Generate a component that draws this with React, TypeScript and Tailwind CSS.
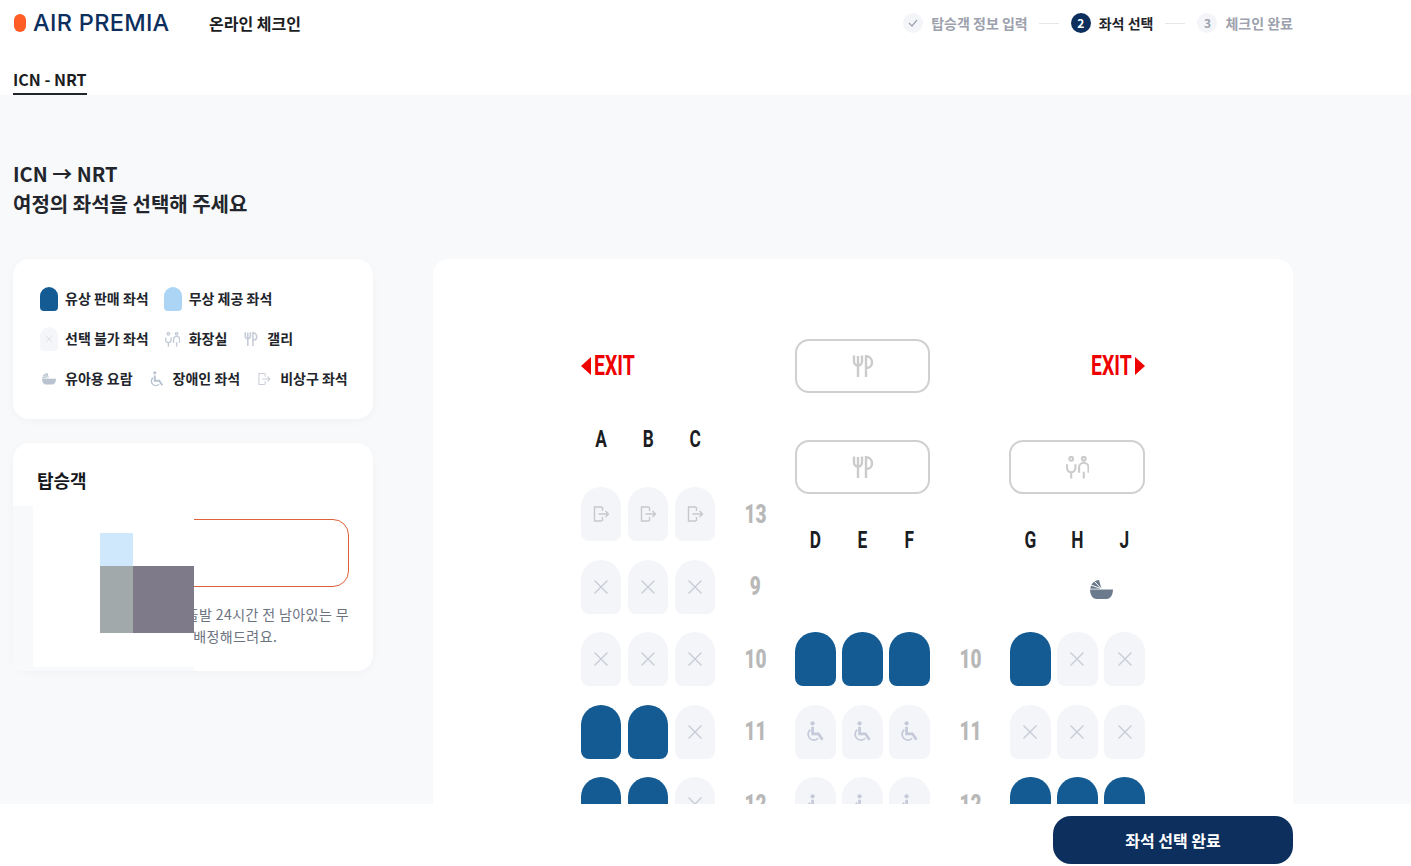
type SeatKind = "paid" | "none" | "wheel" | "exit";

const sans = { fontFamily: '"Noto Sans CJK KR", "Noto Sans", sans-serif' };
const narrow = { fontFamily: 'Roboto, "Liberation Sans", sans-serif' };

const CrossIcon = ({ size = 16, color = "#c9ccd6" }: { size?: number; color?: string }) => (
  <svg width={size} height={size} viewBox="0 0 16 16" fill="none" stroke={color} strokeWidth="1.4">
    <path d="M1.5 1.5l13 13M14.5 1.5l-13 13" />
  </svg>
);

const ExitIcon = ({ size = 18, color = "#c6c8cc" }: { size?: number; color?: string }) => (
  <svg width={size} height={size} viewBox="0 0 18 18" fill="none" stroke={color} strokeWidth="1.4">
    <path d="M10 2H2.500v14H10" />
    <path d="M10.500 2v4M10.500 12v4" />
    <path d="M6.500 9h10M13.500 6l3 3-3 3" />
  </svg>
);

const WheelIcon = ({ size = 21, color = "#c5c9d9" }: { size?: number; color?: string }) => (
  <svg width={size} height={size} viewBox="0 0 18 18" fill="none" stroke={color} strokeWidth="1.5">
    <circle cx="6.500" cy="2" r="1.800" fill={color} stroke="none" />
    <path d="M6.500 5v6h5l3.500 5" strokeWidth="2.300" />
    <path d="M4.500 7.500a5 5 0 1 0 6.800 7.300" />
  </svg>
);

const GalleyIcon = ({ size = 22, color = "#cbcbcb" }: { size?: number; color?: string }) => (
  <svg width={size} height={size} viewBox="0 0 22 22" fill="none" stroke={color} strokeWidth="2.400">
    <path d="M2 0.500v6a4 4 0 0 0 8 0v-6M6 1v21" />
    <path d="M14 22V1.200c3.500 0 6 2.800 6 6.300s-2.500 5.500-6 5.500" />
  </svg>
);

const LavatoryIcon = ({ size = 23, color = "#cbcbcb" }: { size?: number; color?: string }) => (
  <svg width={size} height={size} viewBox="0 0 22 22" fill="none" stroke={color} strokeWidth="2">
    <circle cx="5" cy="2.600" r="1.800" />
    <circle cx="17" cy="2.600" r="1.800" />
    <path d="M1 8v3.500a4 4 0 0 0 8 0V8M5 15v6.500" />
    <path d="M12.500 16V11a4.500 4.500 0 0 1 9 0v5M17 15v6.500" />
  </svg>
);

const BassinetIcon = ({ size = 23, color = "#6b7a8d" }: { size?: number; color?: string }) => (
  <svg width={size} height={(size * 20) / 23} viewBox="0 0 23 20" fill={color}>
    <path d="M0 9.500h23c0 5-2.500 9.500-6.500 9.500h-10C2.500 19 0 14.500 0 9.500z" />
    <path d="M0.500 8.800C0.500 4.200 4 0.500 9 0l2.500 8.800z" />
    <path d="M11.500 8.800L0.800 5M11.500 8.800L4.500 1.500" stroke="#ffffff" strokeWidth="1" fill="none" />
  </svg>
);

const Seat = ({ kind }: { kind: SeatKind }) => {
  if (kind === "paid") {
    return <div className="h-[54px] rounded-t-[20px] rounded-b-[8px] bg-[#135b92]" />;
  }
  return (
    <div className="h-[54px] rounded-t-[20px] rounded-b-[8px] bg-[#f3f5f8] flex items-center justify-center">
      {kind === "none" && <CrossIcon />}
      {kind === "wheel" && <WheelIcon />}
      {kind === "exit" && <ExitIcon />}
    </div>
  );
};

const SeatRow = ({ seats }: { seats: SeatKind[] }) => (
  <div className="grid grid-cols-3 gap-[6.500px]">
    {seats.map((kind, i) => (
      <Seat key={i} kind={kind} />
    ))}
  </div>
);

const Letters = ({ labels }: { labels: string[] }) => (
  <div className="grid grid-cols-3 gap-[6.500px] h-[22px] items-center text-center text-[24px] font-bold text-[#1b1d22] leading-none" style={narrow}>
    {labels.map((l) => (
      <span key={l} className="scale-x-[.72]">
        {l}
      </span>
    ))}
  </div>
);

const RowNumbers = ({ numbers, className }: { numbers: string[]; className: string }) => (
  <div className={className}>
    {numbers.map((n) => (
      <div key={n} className="h-[54px] flex items-center justify-center text-[25px] font-black text-[#b8b8b8] leading-none" style={narrow}>
        <span className="scale-x-[.76]">{n}</span>
      </div>
    ))}
  </div>
);

const Exit = ({ side }: { side: "left" | "right" }) => (
  <div className={`h-[54px] flex items-center gap-[3px] ${side === "left" ? "justify-start" : "justify-end"}`}>
    {side === "left" && <span className="w-0 h-0 border-y-[9px] border-y-transparent border-r-[10px] border-r-[#ee0000]" />}
    <span className="w-[41px] text-[27px] font-bold text-[#ee0000] leading-none" style={narrow}>
      <span className="inline-block origin-left scale-x-[.72]">EXIT</span>
    </span>
    {side === "right" && <span className="w-0 h-0 border-y-[9px] border-y-transparent border-l-[10px] border-l-[#ee0000]" />}
  </div>
);

const FacilityBox = ({ children }: { children: React.ReactNode }) => (
  <div className="h-[54px] rounded-[14px] border-2 border-[#d0d0d0] flex items-center justify-center">
    {children}
  </div>
);

const LegendItem = ({ icon, label }: { icon: React.ReactNode; label: string }) => (
  <div className="flex items-center gap-[7px]">
    <div className="w-[18px] h-[24px] flex items-center justify-center">{icon}</div>
    <span className="pb-[2px] text-[14px] leading-[20px] font-semibold text-[#22252b] whitespace-nowrap">{label}</span>
  </div>
);

const Legend = () => (
  <div className="w-[360px] rounded-[16px] bg-white px-[27px] py-[28px] flex flex-col gap-[16px] shadow-[0_2px_10px_rgba(30,40,60,0.03)]">
    <div className="flex gap-[15px]">
      <LegendItem icon={<div className="w-[18px] h-[24px] rounded-t-[9px] rounded-b-[4px] bg-[#135b92]" />} label="유상 판매 좌석" />
      <LegendItem icon={<div className="w-[18px] h-[24px] rounded-t-[9px] rounded-b-[4px] bg-[#acd5f5]" />} label="무상 제공 좌석" />
    </div>
    <div className="flex gap-[15px]">
      <LegendItem
        icon={
          <div className="w-[18px] h-[24px] rounded-t-[9px] rounded-b-[4px] bg-[#f5f6f9] flex items-center justify-center">
            <CrossIcon size={8} color="#d5d8e0" />
          </div>
        }
        label="선택 불가 좌석"
      />
      <LegendItem icon={<LavatoryIcon size={15} color="#c4cbd6" />} label="화장실" />
      <LegendItem icon={<GalleyIcon size={14} color="#c4cbd6" />} label="갤리" />
    </div>
    <div className="flex gap-[15px]">
      <LegendItem icon={<BassinetIcon size={14} color="#b9c3d0" />} label="유아용 요람" />
      <LegendItem icon={<WheelIcon size={16} color="#b9c3d0" />} label="장애인 좌석" />
      <LegendItem icon={<ExitIcon size={14} color="#c9ced8" />} label="비상구 좌석" />
    </div>
  </div>
);

const Passenger = () => (
  <div className="relative mt-[24px] w-[360px] rounded-[16px] bg-white px-[24px] pt-[24px] pb-[24px] shadow-[0_2px_10px_rgba(30,40,60,0.03)]">
    <h3 className="text-[18px] leading-[27px] font-bold text-[#16181d]">탑승객</h3>
    <div className="mt-[25px] h-[68px] rounded-[16px] border border-[#e0623a]" />
    <p className="mt-[16px] text-[14px] leading-[22px] tracking-[0.4px] text-[#6b7280] whitespace-nowrap">
      <span className="block text-right">
        <span className="tracking-normal">좌석을 선택하지 않으면 </span>출발 24시간 전 남아있는 무
      </span>
      <span className="block pl-[2px]">
        <span className="tracking-normal">상 제공 좌석으로 자동으로 </span>배정해드려요.
      </span>
    </p>
    {/* broken image tile sitting over the card */}
    <div className="absolute left-0 top-[63px] w-[181px] h-[165px] bg-[#f8f9fb]">
      <svg className="ml-[20px]" width="161" height="161" viewBox="0 0 161 161">
        <rect width="161" height="161" fill="#ffffff" />
        <rect x="67" y="27" width="33" height="33" fill="#cfe8fc" />
        <rect x="67" y="60" width="33" height="67" fill="#a2a9aa" />
        <rect x="100" y="60" width="61" height="67" fill="#7e7a8a" />
      </svg>
    </div>
  </div>
);

const SeatMap = () => (
  <div className="flex-1 h-[700px] rounded-t-[16px] bg-white pt-[80px] flex justify-center">
    <div className="flex w-[564px] items-start">
      <div className="w-[134px] flex flex-col">
        <Exit side="left" />
        <div className="mt-[34px]">
          <Letters labels={["A", "B", "C"]} />
        </div>
        <div className="mt-[38px] flex flex-col gap-[18.500px]">
          <SeatRow seats={["exit", "exit", "exit"]} />
          <SeatRow seats={["none", "none", "none"]} />
          <SeatRow seats={["none", "none", "none"]} />
          <SeatRow seats={["paid", "paid", "none"]} />
          <SeatRow seats={["paid", "paid", "none"]} />
        </div>
      </div>
      <RowNumbers numbers={["13", "9", "10", "11", "12"]} className="w-[80px] mt-[148px] flex flex-col gap-[18.500px]" />
      <div className="w-[135px] flex flex-col">
        <FacilityBox>
          <GalleyIcon />
        </FacilityBox>
        <div className="mt-[47px]">
          <FacilityBox>
            <GalleyIcon />
          </FacilityBox>
        </div>
        <div className="mt-[34px]">
          <Letters labels={["D", "E", "F"]} />
        </div>
        <div className="mt-[82px] flex flex-col gap-[18.500px]">
          <SeatRow seats={["paid", "paid", "paid"]} />
          <SeatRow seats={["wheel", "wheel", "wheel"]} />
          <SeatRow seats={["wheel", "wheel", "wheel"]} />
        </div>
      </div>
      <RowNumbers numbers={["10", "11", "12"]} className="w-[80px] mt-[293px] flex flex-col gap-[18.500px]" />
      <div className="w-[135px] flex flex-col">
        <Exit side="right" />
        <div className="mt-[47px] -ml-px">
          <FacilityBox>
            <LavatoryIcon />
          </FacilityBox>
        </div>
        <div className="mt-[34px]">
          <Letters labels={["G", "H", "J"]} />
        </div>
        <div className="mt-[30px] h-[20px] pl-[47px] flex justify-center">
          <BassinetIcon />
        </div>
        <div className="mt-[32px] flex flex-col gap-[18.500px]">
          <SeatRow seats={["paid", "none", "none"]} />
          <SeatRow seats={["none", "none", "none"]} />
          <SeatRow seats={["paid", "paid", "paid"]} />
        </div>
      </div>
    </div>
  </div>
);

const Stepper = () => (
  <div className="flex items-center text-[14px] font-semibold text-[#9ca1ad]">
    <span className="w-5 h-5 rounded-full bg-[#f3f5f8] flex items-center justify-center">
      <svg width="10" height="8" viewBox="0 0 10 8" fill="none" stroke="#9aa3b0" strokeWidth="1.2">
        <path d="M1 4l3 3 5-6" />
      </svg>
    </span>
    <span className="ml-2">탑승객 정보 입력</span>
    <span className="mx-[11.500px] w-5 h-px bg-[#e5e7eb]" />
    <span className="w-5 h-5 rounded-full bg-[#0c2f5e] flex items-center justify-center text-[12px] font-bold text-white">2</span>
    <span className="ml-2 text-[#22252b]">좌석 선택</span>
    <span className="mx-3 w-5 h-px bg-[#e5e7eb]" />
    <span className="w-5 h-5 rounded-full bg-[#f3f5f8] flex items-center justify-center text-[12px] text-[#9ca1ad]">3</span>
    <span className="ml-2">체크인 완료</span>
  </div>
);

export default function App() {
  return (
    <div className="h-screen overflow-hidden flex flex-col bg-white" style={sans}>
      <header className="shrink-0 w-[1293px] h-[46px] pl-[14px] flex items-center justify-between">
        <div className="flex items-center">
          <span className="w-3 h-[18px] rounded-full bg-[#ff5c26]" />
          <span className="ml-[7px] w-[136px] text-[23.500px] leading-none font-medium tracking-[0.3px] text-[#0c2f5e] whitespace-nowrap" style={{ fontFamily: "Inter, sans-serif" }}>
            AIR PREMIA
          </span>
          <span className="ml-10 text-[16px] font-bold text-[#1b1d22]">온라인 체크인</span>
        </div>
        <Stepper />
      </header>

      <nav className="shrink-0 h-[49px] pl-[13px] flex items-end">
        <span className="h-[27px] border-b-2 border-[#22252b] text-[16px] leading-[23px] font-bold text-[#1b1d22]">ICN - NRT</span>
      </nav>

      <main className="flex-1 min-h-0 overflow-hidden bg-[#f8f9fb] pl-[13px] pt-[64px]">
        <h2 className="text-[20px] leading-[30px] font-bold text-[#22252b]">
          ICN → NRT
          <br />
          여정의 좌석을 선택해 주세요
        </h2>
        <div className="mt-[40px] w-[1280px] flex items-start gap-[60px]">
          <div className="shrink-0">
            <Legend />
            <Passenger />
          </div>
          <SeatMap />
        </div>
      </main>

      <footer className="shrink-0 h-[62px] w-[1293px] pt-3 flex justify-end">
        <button className="w-[240px] h-[48px] rounded-[18px] bg-[#0c2f5e] text-white text-[16px] font-bold">좌석 선택 완료</button>
      </footer>
    </div>
  );
}
